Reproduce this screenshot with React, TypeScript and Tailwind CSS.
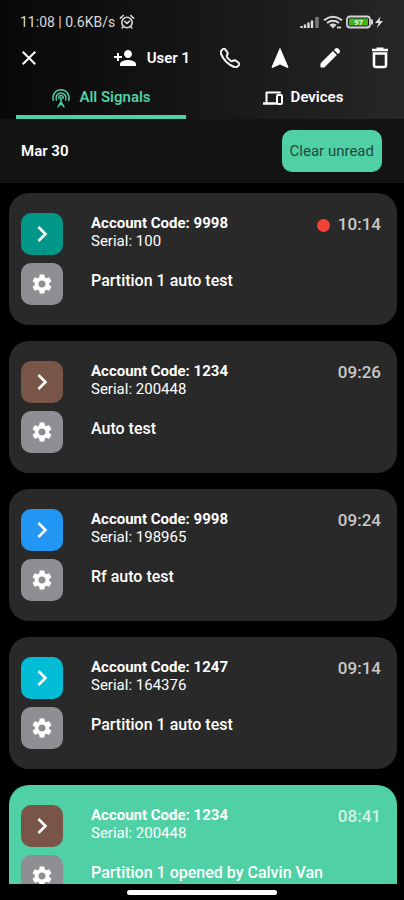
import React, { useState } from "react";
import { MdChevronRight, MdClose, MdPersonAdd, MdSettings } from "react-icons/md";
import { BsTelephone } from "react-icons/bs";

interface Signal {
  id: number;
  account: string;
  serial: string;
  message: string;
  time: string;
  tone: string;
  unread?: boolean;
  opened?: boolean;
}

const initialSignals: Signal[] = [
  { id: 1, account: "9998", serial: "100", message: "Partition 1 auto test", time: "10:14", tone: "bg-[#009688]", unread: true },
  { id: 2, account: "1234", serial: "200448", message: "Auto test", time: "09:26", tone: "bg-[#795548]" },
  { id: 3, account: "9998", serial: "198965", message: "Rf auto test", time: "09:24", tone: "bg-[#2196f3]" },
  { id: 4, account: "1247", serial: "164376", message: "Partition 1 auto test", time: "09:14", tone: "bg-[#00bcd4]" },
  { id: 5, account: "1234", serial: "200448", message: "Partition 1 opened by Calvin Van", time: "08:41", tone: "bg-[#795548]", opened: true },
];

const AlarmIcon = () => (
  <svg className="size-4" viewBox="0 0 16 16" fill="none" stroke="currentColor" strokeWidth="1.6" strokeLinecap="round">
    <circle cx="8" cy="8.5" r="5.2" />
    <path d="M5.8 7.4 8 9.4l2.4-2.2M1.4 4.2l2.8-2.7M14.6 4.2l-2.8-2.7M4.2 12.6l-1 1.400M11.8 12.6l1 1.400" />
  </svg>
);

const StatusIcons = () => (
  <svg className="h-4 w-[84px]" viewBox="0 0 84 16" fill="none">
    <path d="M1.5 12v2M5 10.500v3.500M8.500 8.500v5.500M12 6.500v7.500" stroke="#ddd" strokeWidth="2.400" />
    <path d="M17 3v11" stroke="#777" strokeWidth="3.500" />
    <path d="M24 6.200q9-6.800 18 0M27 9q6-4.400 12 0M30 11.500q3-2 6 0" stroke="#ddd" strokeWidth="2" />
    <path d="m33 14.500-2.800-3.200h5.600z" fill="#ddd" />
    <path d="M37 13.500h4" stroke="#ddd" strokeWidth="1.800" />
    <rect x="47" y="2.500" width="23" height="11" rx="3" stroke="#d5d5d5" strokeWidth="1.800" />
    <rect x="49" y="4.500" width="19" height="7" fill="#3fb618" />
    <path d="M72 5.500v5" stroke="#d5d5d5" strokeWidth="2" />
    <text x="58.500" y="11" fill="#e8f8e0" fontSize="8" fontWeight="700" fontFamily="Roboto, sans-serif" textAnchor="middle">97</text>
    <path d="m80.500 2.500-5.500 6.500h3.500l-1.500 5 6-7h-3.500z" fill="#ddd" />
  </svg>
);

const AntennaIcon = () => (
  <svg className="size-5" viewBox="0 0 20 20" fill="none" stroke="currentColor" strokeWidth="1.500" strokeLinecap="round">
    <path d="M2.400 12.300A8 8 0 1 1 17.600 12.300M5.400 12A5 5 0 1 1 14.600 12M8 10.500a2.200 2.200 0 1 1 4 0" />
    <path d="M10 9.500v4.500l-3 4.800M10 14l3 4.800M8.400 16.600h3.200" />
  </svg>
);

const DevicesIcon = () => (
  <svg className="size-5" viewBox="0 0 20 20" fill="none" stroke="currentColor">
    <path d="M3.500 14.500V4.500h13.500" strokeWidth="2" strokeLinejoin="round" strokeLinecap="round" />
    <path d="M0 15.500h13.500" strokeWidth="2.500" />
    <rect x="14" y="7" width="5" height="9" rx="1" strokeWidth="2" />
  </svg>
);

const ArrowIcon = () => (
  <svg className="size-6" viewBox="0 0 24 24" fill="currentColor">
    <path d="M12 1.500 20.500 21.200l-.8.800L12 18.600 4.300 22l-.8-.8z" />
  </svg>
);

const PencilIcon = () => (
  <svg className="size-6" viewBox="0 0 24 24" fill="currentColor">
    <path d="M2.500 18.200v3.300h3.800L18.800 9l-3.900-3.900L2.900 17z" />
    <path d="m16 4 1.400-1.400a2 2 0 0 1 2.800 0l1.300 1.300a2 2 0 0 1 0 2.800L20 8.100z" />
  </svg>
);

const TrashIcon = () => (
  <svg className="size-6" viewBox="0 0 24 24" fill="none" stroke="currentColor">
    <path d="M4 4h16M8.500 2.800h7" strokeWidth="2.600" />
    <path d="M6 7.500h12V19a2 2 0 0 1-2 2H8a2 2 0 0 1-2-2z" strokeWidth="2.600" />
  </svg>
);

const SignalCard = ({ signal }: { signal: Signal }) => (
  <li
    className={
      signal.opened
        ? "flex h-[132px] shrink-0 rounded-[20px] bg-[#4fd1a5] pt-5 pr-4 pl-3"
        : "flex h-[132px] shrink-0 rounded-[20px] bg-[#292929] pt-5 pr-4 pl-3"
    }
  >
    <div className="flex flex-col gap-2">
      <button
        type="button"
        aria-label="Open signal"
        className={`flex size-[42px] items-center justify-center rounded-[10px] text-white ${signal.tone}`}
      >
        <MdChevronRight className="size-8" />
      </button>
      <button
        type="button"
        aria-label="Signal settings"
        className="flex size-[42px] items-center justify-center rounded-[10px] bg-[#8e8e93] text-white"
      >
        <MdSettings className="size-6" />
      </button>
    </div>
    <div className="ml-7 min-w-0 flex-1 text-white">
      <h3 className="text-[15px] leading-5 font-bold">Account Code: {signal.account}</h3>
      <p className="text-[15px] leading-4">Serial: {signal.serial}</p>
      <p className="mt-6 text-[16px] leading-4 font-medium whitespace-nowrap">{signal.message}</p>
    </div>
    <div className="flex h-6 items-center gap-2 text-[17px] font-medium text-white/75">
      {signal.unread && <span className="size-[13px] rounded-full bg-[#f44336]" />}
      <time>{signal.time}</time>
    </div>
  </li>
);

const App: React.FC = () => {
  const [signals, setSignals] = useState(initialSignals);
  const [tab, setTab] = useState<"signals" | "devices">("signals");

  const clearUnread = () =>
    setSignals((prev) => prev.map((signal) => ({ ...signal, unread: false })));

  const tabClass = (active: boolean) =>
    active
      ? "flex h-full flex-1 items-center justify-center gap-2 border-b-4 border-[#4fd1a5] pt-1 text-[#4fd1a5]"
      : "flex h-full flex-1 items-center justify-center gap-2 border-b-4 border-transparent pt-1 text-white";

  return (
    <div className="flex h-screen flex-col bg-black font-['Roboto',sans-serif] text-white">
      <header className="bg-linear-to-r from-[#080808] to-[#272727]">
        <div className="flex h-10 items-center justify-between px-5 pt-1 text-[#d8d8d8]">
          <div className="flex items-center gap-1 text-[14px]">
            <span>11:08 | 0.6KB/s</span>
            <AlarmIcon />
          </div>
          <StatusIcons />
        </div>
        <div className="flex h-9 items-center justify-between pr-3 pl-[17px]">
          <button type="button" aria-label="Close">
            <MdClose className="size-6" />
          </button>
          <div className="flex items-center gap-7">
            <button type="button" className="flex items-center gap-2.5 text-[15px] font-semibold">
              <MdPersonAdd className="size-6" />
              User 1
            </button>
            <div className="flex items-center gap-[26px]">
              <button type="button" aria-label="Call" className="flex size-6 items-center justify-center">
                <BsTelephone className="size-5" strokeWidth="0.6" />
              </button>
              <button type="button" aria-label="Navigate">
                <ArrowIcon />
              </button>
              <button type="button" aria-label="Edit">
                <PencilIcon />
              </button>
              <button type="button" aria-label="Delete">
                <TrashIcon />
              </button>
            </div>
          </div>
        </div>
        <nav className="flex h-[43px] gap-8 px-4 text-[15px] font-semibold">
          <button type="button" className={tabClass(tab === "signals")} onClick={() => setTab("signals")}>
            <AntennaIcon />
            All Signals
          </button>
          <button type="button" className={tabClass(tab === "devices")} onClick={() => setTab("devices")}>
            <DevicesIcon />
            Devices
          </button>
        </nav>
      </header>
      <div className="flex h-16 shrink-0 items-center justify-between bg-[#141414] pr-[22px] pl-[21px]">
        <h2 className="text-[15px] font-semibold">Mar 30</h2>
        <button
          type="button"
          className="h-[42px] rounded-[10px] bg-[#4fd1a5] px-2 text-[15px] text-[#1f4a3c]"
          onClick={clearUnread}
        >
          Clear unread
        </button>
      </div>
      <ul className="flex min-h-0 flex-1 flex-col gap-4 overflow-y-auto pt-[10px] pr-[7px] pl-[9px] [scrollbar-width:none]">
        {signals.map((signal) => (
          <SignalCard key={signal.id} signal={signal} />
        ))}
      </ul>
      <footer className="flex h-4 shrink-0 items-center justify-center">
        <div className="h-[5px] w-[150px] rounded-full bg-white" />
      </footer>
    </div>
  );
};

export default App;
